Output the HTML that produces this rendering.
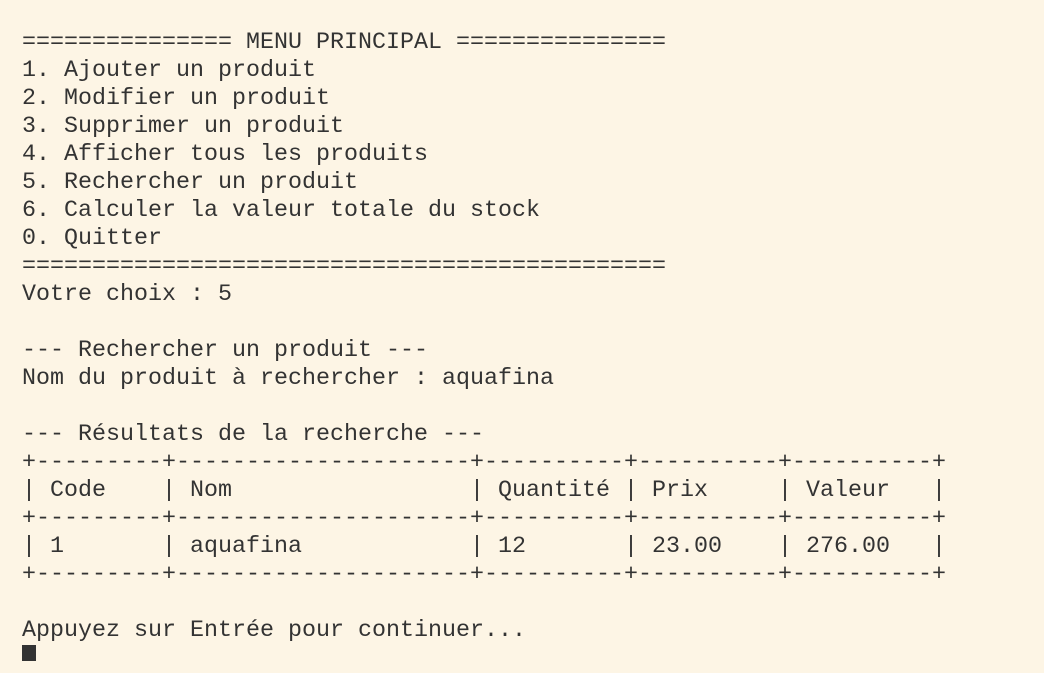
<!DOCTYPE html>
<html><head><meta charset="utf-8"><style>
html,body{margin:0;padding:0;background:#fdf5e5;width:1044px;height:659px;overflow:hidden}
pre{margin:0;position:absolute;left:22px;top:29px;font-family:"Liberation Mono",monospace;font-size:23.33px;line-height:28px;color:#333;letter-spacing:0}
.cur{display:inline-block;width:14px;height:16px;background:#333;vertical-align:top;margin-top:0}
</style></head><body>
<pre>=============== MENU PRINCIPAL ===============
1. Ajouter un produit
2. Modifier un produit
3. Supprimer un produit
4. Afficher tous les produits
5. Rechercher un produit
6. Calculer la valeur totale du stock
0. Quitter
==============================================
Votre choix : 5

--- Rechercher un produit ---
Nom du produit à rechercher : aquafina

--- Résultats de la recherche ---
+---------+---------------------+----------+----------+----------+
| Code    | Nom                 | Quantité | Prix     | Valeur   |
+---------+---------------------+----------+----------+----------+
| 1       | aquafina            | 12       | 23.00    | 276.00   |
+---------+---------------------+----------+----------+----------+

Appuyez sur Entrée pour continuer...
<span class="cur"></span></pre>
</body></html>
